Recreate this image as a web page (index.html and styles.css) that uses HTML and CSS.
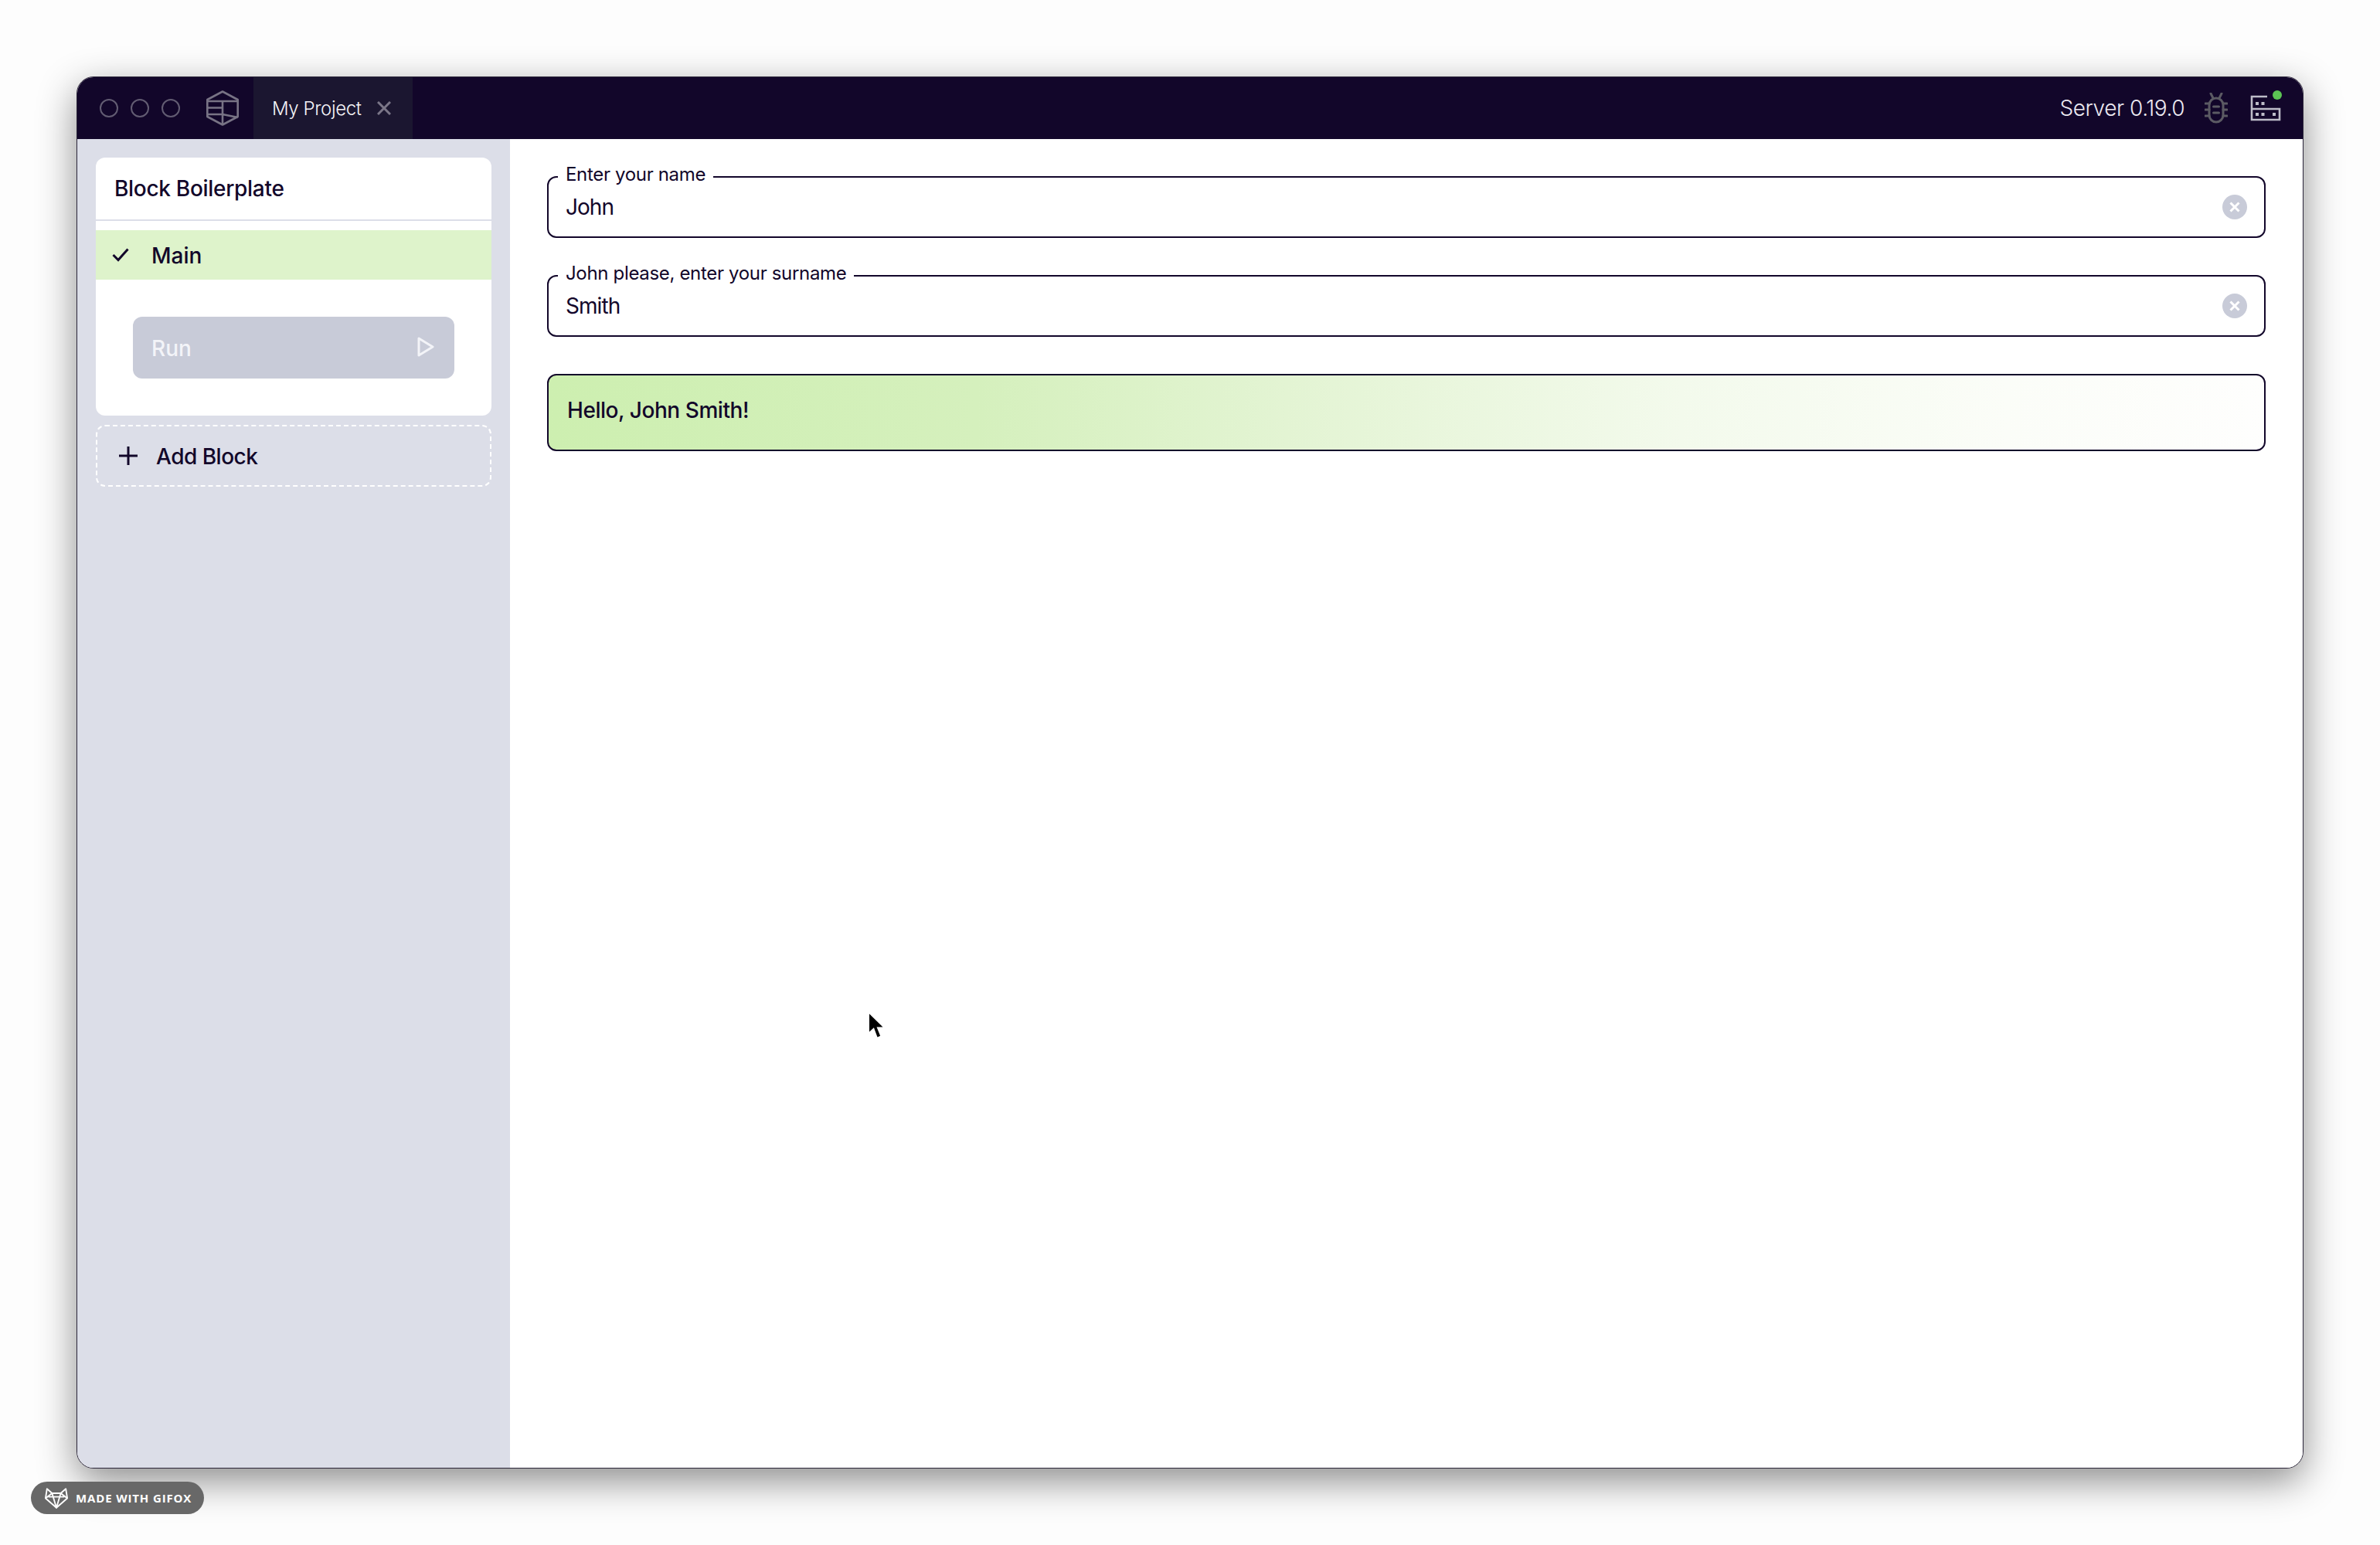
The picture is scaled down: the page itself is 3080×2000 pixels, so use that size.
FILE: index.html
```html
<!DOCTYPE html>
<html lang="en">
<head>
<meta charset="utf-8">
<title>My Project</title>
<link rel="stylesheet" href="styles.css">
</head>
<body>
<div class="window">
  <header class="titlebar">
    <div class="traffic"><span class="dot"></span><span class="dot"></span><span class="dot"></span></div>
    <svg class="logo" viewBox="0 0 42 46" fill="none" stroke="#787385" stroke-width="2.6" stroke-linejoin="round">
      <path d="M21 1.500 40.700 12V34L21 44.500 1.300 34V12Z"/>
      <path d="M1.300 14H40.700M21 14V44.500M1.300 22.500H21M1.300 31H21M21 31 40.700 35"/>
    </svg>
    <div class="tab">
      <span class="tab-name">My Project</span>
      <svg class="tab-close" viewBox="0 0 18 18" fill="none" stroke="#7b7688" stroke-width="3"><path d="M1 1 17 17M17 1 1 17"/></svg>
    </div>
    <div class="spacer"></div>
    <span class="server">Server 0.19.0</span>
    <svg class="bug" viewBox="0 0 30 40" fill="none" stroke="#5b5a63" stroke-width="3" stroke-linecap="round">
      <rect x="6" y="7" width="18" height="31" rx="9"/>
      <path d="M8 1 11 7M22 1 19 7M1 14H6M24 14H29M1 22H6M24 22H29M1 30H6M24 30H29M11.500 18H18.500M11.500 26H18.500"/>
    </svg>
    <div class="server-icon">
      <svg viewBox="0 0 40 34" fill="none" stroke="#bdbcc8" stroke-width="2.600">
        <path d="M22 2H2V32H38V18H2M2 18V2"/>
        <path stroke-width="4" stroke-dasharray="4 3.500" d="M7 11H19"/>
        <path stroke-width="4" stroke-dasharray="4 3.500" d="M7 25H19"/>
        <path stroke-width="4" d="M29 25H33"/>
      </svg>
      <span class="status"></span>
    </div>
  </header>
  <div class="body">
    <aside class="sidebar">
      <section class="card">
        <h2 class="card-title">Block Boilerplate</h2>
        <div class="step">
          <svg class="check" viewBox="0 0 22 18" fill="none" stroke="#12062a" stroke-width="3"><path d="M1.500 9 8 15.500 20.500 1.500"/></svg>
          <span>Main</span>
        </div>
        <div class="run-wrap">
          <button class="run" type="button">
            <span class="run-label">Run</span>
            <svg class="play" viewBox="0 0 22 26" fill="none" stroke="#f3f4f8" stroke-width="3" stroke-linejoin="round"><path d="M2 2 20 13 2 24Z"/></svg>
          </button>
        </div>
      </section>
      <button class="add" type="button">
        <svg class="plus" viewBox="0 0 24 24" fill="none" stroke="#12062a" stroke-width="3"><path d="M12 0V24M0 12H24"/></svg>
        <span>Add Block</span>
      </button>
    </aside>
    <main class="content">
      <div class="field">
        <span class="field-label">Enter your name</span>
        <span class="field-value">John</span>
        <svg class="clear" viewBox="0 0 32 32"><circle cx="16" cy="16" r="16" fill="#c8cbd8"/><path d="M10.500 10.500 21.500 21.500M21.500 10.500 10.500 21.500" stroke="#fff" stroke-width="3"/></svg>
      </div>
      <div class="field">
        <span class="field-label">John please, enter your surname</span>
        <span class="field-value">Smith</span>
        <svg class="clear" viewBox="0 0 32 32"><circle cx="16" cy="16" r="16" fill="#c8cbd8"/><path d="M10.500 10.500 21.500 21.500M21.500 10.500 10.500 21.500" stroke="#fff" stroke-width="3"/></svg>
      </div>
      <div class="output">Hello, John Smith!</div>
    </main>
  </div>
</div>
<svg class="cursor" viewBox="0 0 24 38"><path d="M2 1V29L8.500 23 13 35 18.500 32.500 14 21.500H23Z" fill="#000" stroke="#fff" stroke-width="2"/></svg>
<div class="badge">
  <svg class="fox" viewBox="0 0 32 28" fill="none" stroke="#fff" stroke-width="2" stroke-linejoin="round">
    <path d="M3 1 10 7H22L29 1 31 14 16 27 1 14Z"/>
    <path d="M1 14 10 7 16 27 22 7 31 14M5 12H27"/>
  </svg>
  <span>MADE WITH GIFOX</span>
</div>
</body>
</html>
```
FILE: styles.css
```css
* { box-sizing: border-box; }
html, body { height: 2000px; }
body {
  margin: 0;
  padding: 99px 0 0 99px;
  background: #fdfdfd;
  overflow: hidden;
  font-family: Inter, "Liberation Sans", sans-serif;
  color: #12062a;
}
.window {
  width: 2882px;
  height: 1802px;
  display: flex;
  flex-direction: column;
  border-radius: 22px;
  overflow: hidden;
  border: 1px solid #2a2438;
  background: #fff;
  box-shadow: 0 16px 50px rgba(0, 0, 0, 0.45);
}
.titlebar {
  height: 81px;
  margin: -1px -1px 0;
  flex: none;
  display: flex;
  align-items: center;
  background: #12062a;
  padding-left: 30px;
  padding-right: 29px;
}
.traffic { display: flex; gap: 16px; }
.dot { width: 24px; height: 24px; border-radius: 50%; border: 2px solid #625c72; }
.logo { width: 42px; height: 46px; margin-left: 34px; flex: none; }
.tab {
  width: 206px;
  height: 81px;
  margin-left: 19px;
  background: #1b1630;
  display: flex;
  align-items: center;
  padding-left: 24px;
}
.tab-name { font-size: 24px; font-weight: 300; color: #f4f3f7; letter-spacing: -0.4px; padding-top: 1px; white-space: nowrap; }
.tab-close { width: 18px; height: 18px; margin-left: 21px; flex: none; }
.spacer { flex: 1; }
.server { font-size: 28px; font-weight: 300; color: #ece9f1; letter-spacing: -0.45px; padding-top: 1px; white-space: nowrap; }
.bug { width: 30px; height: 40px; margin-left: 26px; flex: none; }
.server-icon { position: relative; width: 40px; height: 34px; margin-left: 29px; flex: none; }
.server-icon svg { display: block; width: 40px; height: 34px; }
.status { position: absolute; top: -6px; right: -1px; width: 12px; height: 12px; border-radius: 50%; background: #5cc454; }
.body { flex: 1; display: flex; min-height: 0; }
.sidebar {
  width: 560px;
  flex: none;
  background: #dcdee8;
  padding: 24px 24px 0;
  display: flex;
  flex-direction: column;
  gap: 12px;
}
.card { background: #fff; border-radius: 12px; height: 334px; display: flex; flex-direction: column; }
.card-title {
  margin: 0;
  height: 82px;
  flex: none;
  border-bottom: 2px solid #dcdee8;
  display: flex;
  align-items: center;
  padding: 0 0 0 24px;
  font-size: 28px;
  font-weight: 550;
  letter-spacing: -0.3px;
}
.step {
  margin-top: 12px;
  height: 64px;
  background: #def3cb;
  display: flex;
  align-items: center;
  padding: 1px 0 0 21px;
  font-size: 28px;
  font-weight: 500;
}
.check { width: 22px; height: 18px; margin-right: 29px; margin-top: -1px; flex: none; }
.run-wrap { padding: 48px 48px 0; }
.run {
  width: 100%;
  height: 80px;
  border: 0;
  border-radius: 12px;
  background: #c8cbd8;
  color: #f3f4f8;
  font: 500 28px Inter, "Liberation Sans", sans-serif;
  display: flex;
  align-items: center;
  justify-content: space-between;
  padding: 0 26px 0 24px;
}
.run-label { padding-top: 2px; }
.play { width: 22px; height: 26px; margin-top: -2px; }
.add {
  height: 80px;
  border: 2px dashed #fff;
  border-radius: 12px;
  background: transparent;
  color: #12062a;
  font: 550 28px Inter, "Liberation Sans", sans-serif;
  letter-spacing: -0.5px;
  display: flex;
  align-items: center;
  padding: 1px 0 0 28px;
}
.plus { width: 24px; height: 24px; margin-right: 24px; margin-top: -1px; flex: none; }
.content { flex: 1; padding: 48px 48px 0; display: flex; flex-direction: column; background: #fff; }
.field {
  position: relative;
  height: 80px;
  margin-bottom: 48px;
  border: 2px solid #12062a;
  border-radius: 12px;
  display: flex;
  align-items: center;
  justify-content: space-between;
  padding: 0 23px 0 22px;
}
.field-label {
  position: absolute;
  left: 12px;
  top: -18px;
  padding: 0 10px;
  background: linear-gradient(transparent 50%, #fff 50%);
  font-size: 24px;
  line-height: 28px;
  letter-spacing: -0.33px;
  white-space: nowrap;
}
.field-value { font-size: 28px; letter-spacing: -0.95px; }
.clear { width: 32px; height: 32px; flex: none; margin-right: -1px; }
.output {
  height: 100px;
  border: 2px solid #12062a;
  border-radius: 12px;
  background: linear-gradient(90deg, #cdefb0 0%, #d5f0bd 25%, #e3f4d3 43%, #f3faec 66%, #fbfdf8 85%, #fefefd 100%);
  display: flex;
  align-items: center;
  padding: 0 0 6px 24px;
  font-size: 28px;
  font-weight: 450;
  letter-spacing: -0.45px;
}
.cursor { position: absolute; left: 1122px; top: 1309px; width: 24px; height: 38px; }
.badge {
  position: absolute;
  left: 40px;
  top: 1918px;
  width: 224px;
  height: 42px;
  border-radius: 21px;
  background: #686868;
  display: flex;
  align-items: center;
  padding-left: 18px;
  color: #fff;
  font-family: "Open Sans", sans-serif;
  font-weight: 700;
  font-size: 15px;
  letter-spacing: 0.85px;
  white-space: nowrap;
}
.fox { width: 30px; height: 27px; margin-right: 10px; flex: none; }
```
